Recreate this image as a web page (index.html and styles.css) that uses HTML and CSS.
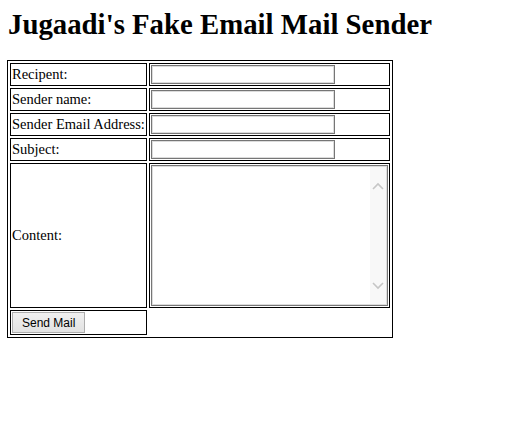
FILE: index.html
```html
<!DOCTYPE html>
<html>
<head>
<meta charset="utf-8">
<title>Jugaadi's Fake Email Mail Sender</title>
<link rel="stylesheet" href="styles.css">
</head>
<body>
<h1 class="title">Jugaadi's Fake Email Mail Sender</h1>
<form class="mail-form">
  <table class="form-table">
    <tr>
      <td class="label">Recipent:</td>
      <td class="field"><input class="text-input" type="text" name="to"></td>
    </tr>
    <tr>
      <td class="label">Sender name:</td>
      <td class="field"><input class="text-input" type="text" name="name"></td>
    </tr>
    <tr>
      <td class="label">Sender Email Address:</td>
      <td class="field"><input class="text-input" type="text" name="from"></td>
    </tr>
    <tr>
      <td class="label">Subject:</td>
      <td class="field"><input class="text-input" type="text" name="subject"></td>
    </tr>
    <tr>
      <td class="label">Content:</td>
      <td class="field">
        <div class="textbox">
          <textarea class="content-input" name="content"></textarea>
          <div class="scrollbar">
            <svg width="12" height="8" viewBox="0 0 12 8"><path d="M1 7 L6 2 L11 7" fill="none" stroke="#c6c6c6" stroke-width="1.6"/></svg>
            <svg width="12" height="8" viewBox="0 0 12 8"><path d="M1 1 L6 6 L11 1" fill="none" stroke="#c6c6c6" stroke-width="1.6"/></svg>
          </div>
        </div>
      </td>
    </tr>
    <tr>
      <td class="label"><button class="send-btn" type="button">Send Mail</button></td>
    </tr>
  </table>
</form>
</body>
</html>
```

FILE: styles.css
```css
html, body {
  background: #fff;
}

body {
  margin: 0 7px;
  font-family: "Liberation Serif", "Times New Roman", serif;
  font-size: 14.5px;
  color: #000;
}

.title {
  margin: 8px 0 19px 1px;
  font-size: 28.8px;
  line-height: 33px;
  font-weight: bold;
}

.mail-form {
  margin: 0;
}

.form-table {
  border: 1px solid #000;
  border-spacing: 2px;
}

.form-table td {
  border: 1px solid #000;
  padding: 1px;
  vertical-align: middle;
}

.label {
  white-space: nowrap;
  line-height: 17px;
}

.text-input {
  display: block;
  box-sizing: border-box;
  width: 184px;
  height: 19px;
  margin: 0;
  padding: 0 2px;
  border: 1px solid #767676;
  box-shadow: inset 0 0 0 1px #dcdcdc;
  background: #fff;
  font: 13px "Liberation Sans", Arial, sans-serif;
}

.textbox {
  display: flex;
  box-sizing: border-box;
  width: 237px;
  height: 141px;
  border: 1px solid #767676;
  box-shadow: inset 0 0 0 1px #dcdcdc;
  padding: 1px;
  background: #fff;
}

.content-input {
  flex: 1;
  margin: 0;
  padding: 2px;
  border: 0;
  resize: none;
  overflow: hidden;
  outline: none;
  font: 13px "Liberation Mono", monospace;
}

.scrollbar {
  width: 16px;
  background: #f8f8f8;
  display: flex;
  flex-direction: column;
  justify-content: space-between;
  align-items: center;
  padding: 15px 0 14px;
}

.scrollbar svg {
  display: block;
}

.send-btn {
  display: block;
  box-sizing: border-box;
  height: 21px;
  margin: 0;
  padding: 0 9px;
  border: 1px solid #adadad;
  background: linear-gradient(#f0f0f0, #e2e2e2);
  font: 12px "Liberation Sans", Arial, sans-serif;
  color: #000;
}
```
